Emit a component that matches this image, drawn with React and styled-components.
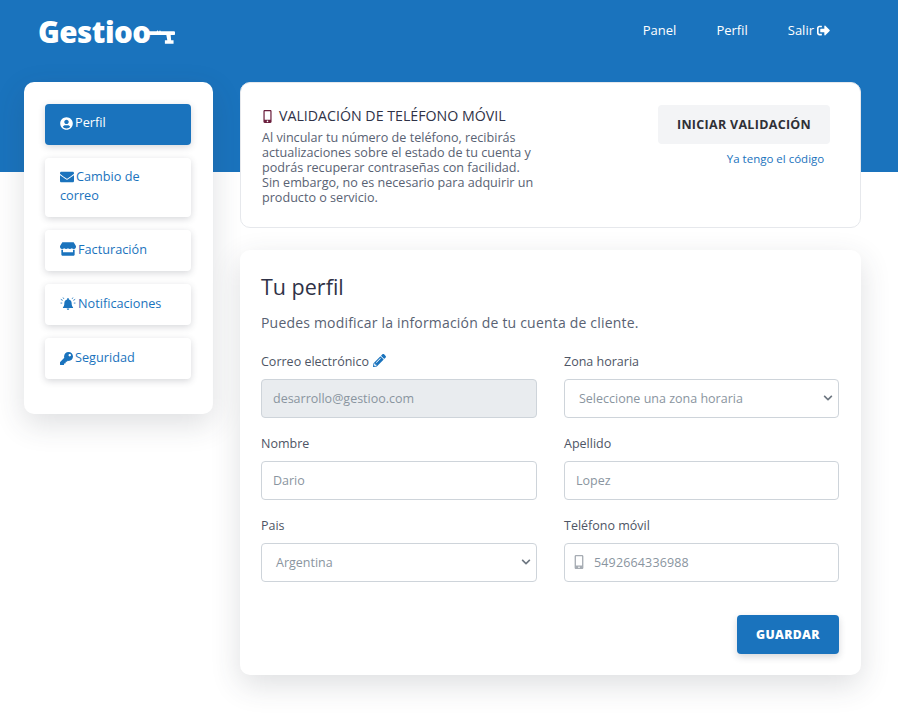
import React from "react";
import styled, { createGlobalStyle } from "styled-components";
import { FaUserCircle, FaEnvelope, FaStore, FaKey, FaMobileAlt, FaPencilAlt, FaSignOutAlt, FaChevronDown } from "react-icons/fa";

const Global = createGlobalStyle`
  html, body { margin: 0; padding: 0; background: #fff; }
  body { font-family: "Open Sans", "Liberation Sans", sans-serif; color: #4a5568; }
  * { box-sizing: border-box; }
`;
const BLUE = "#1a73bd";

const Page = styled.div`
  min-height: 716px;
  background: linear-gradient(${BLUE} 172px, #fff 172px);
`;
const TopBar = styled.header`
  height: 82px;
  display: flex;
  justify-content: space-between;
  padding: 12px 68px 0 38px;
`;
const Logo = styled.div`
  display: flex;
  align-items: center;
  height: 38px;
  color: #fff;
  font-family: "Open Sans", sans-serif;
  font-weight: 800;
  font-size: 29.5px;
  letter-spacing: -0.5px;
`;
const LogoKey = styled.svg`
  margin: 10px 0 0 -2px;
`;
const Nav = styled.nav`
  display: flex;
  gap: 40px;
  height: 36px;
  align-items: center;
`;
const NavLink = styled.a`
  color: #fff;
  font-size: 13px;
  font-weight: 500;
  display: flex;
  align-items: center;
  gap: 3px;
`;
const Layout = styled.div`
  display: grid;
  grid-template-columns: 189px 621px;
  column-gap: 27px;
  padding-left: 24px;
  align-items: start;
`;
const Sidebar = styled.aside`
  background: #fff;
  border-radius: 10px;
  padding: 22px 22px 35px 21px;
  box-shadow: 0 10px 30px rgba(50, 55, 70, 0.16);
  display: flex;
  flex-direction: column;
  gap: 13px;
`;
const MenuItem = styled.a`
  display: block;
  border-radius: 4px;
  height: ${(p) => p.$height};
  padding: ${(p) => (p.$roomy ? "10px" : "9px")} 15px 0;
  font-size: 12.7px;
  line-height: 19px;
  background: ${(p) => (p.$active ? BLUE : "#fff")};
  color: ${(p) => (p.$active ? "#fff" : BLUE)};
  box-shadow: 0 2px 7px rgba(50, 55, 70, 0.2);
  svg { vertical-align: -3px; margin-right: 2px; }
`;
const Main = styled.main`
  display: flex;
  flex-direction: column;
  gap: 22px;
`;
const ValidationCard = styled.section`
  background: #fff;
  border: 1px solid #e6e8ec;
  border-radius: 10px;
  height: 146px;
  padding: 22px 30px 0 20px;
  display: flex;
  justify-content: space-between;
`;
const ValidationText = styled.div`
  width: 276px;
  padding-top: 1px;
`;
const ValidationTitle = styled.h3`
  margin: 0 0 4px;
  font-size: 14.2px;
  line-height: 20px;
  font-weight: 400;
  color: #2f3247;
  white-space: nowrap;
  display: flex;
  align-items: center;
  gap: 5px;
  svg { color: #6b1f3d; }
`;
const ValidationBody = styled.p`
  margin: 0;
  font-size: 12.6px;
  line-height: 15.1px;
  color: #596273;
  padding-left: 1px;
`;
const ValidationActions = styled.div`
  width: 172px;
  display: flex;
  flex-direction: column;
  align-items: center;
`;
const GreyButton = styled.button`
  width: 172px;
  height: 39px;
  border: 0;
  border-radius: 4px;
  background: #f3f4f6;
  color: #2f3036;
  font: 700 12.5px "Open Sans", sans-serif;
  letter-spacing: 0.3px;
`;
const CodeLink = styled.a`
  margin-top: 7px;
  padding-left: 63px;
  white-space: nowrap;
  font-size: 11.5px;
  line-height: 16px;
  color: ${BLUE};
`;
const ProfileCard = styled.section`
  background: #fff;
  border-radius: 10px;
  height: 425px;
  padding: 21px 22px 21px 21px;
  box-shadow: 0 10px 30px rgba(50, 55, 70, 0.16);
  display: flex;
  flex-direction: column;
`;
const Title = styled.h2`
  margin: 0;
  font-size: 21.5px;
  line-height: 32px;
  font-weight: 400;
  color: #2f3247;
`;
const Subtitle = styled.p`
  margin: 10px 0 0;
  font-size: 14px;
  line-height: 20px;
  letter-spacing: 0.19px;
  color: #596273;
`;
const FormGrid = styled.div`
  margin-top: 20px;
  display: grid;
  grid-template-columns: 276px 275px;
  column-gap: 27px;
  row-gap: 17.5px;
`;
const Field = styled.div`
  display: flex;
  flex-direction: column;
`;
const Label = styled.label`
  font-size: 12.5px;
  line-height: 18px;
  height: 18px;
  margin-bottom: 8px;
  color: #4e5565;
  svg { color: ${BLUE}; margin-left: 4px; vertical-align: -1px; }
`;
const Control = styled.div`
  height: 38.5px;
  border: 1px solid #ced4da;
  border-radius: 4px;
  background: ${(p) => (p.$disabled ? "#e9ecef" : "#fff")};
  display: flex;
  align-items: center;
  justify-content: space-between;
  padding: 0 ${(p) => (p.$select ? "5px" : "11px")} 0 ${(p) => (p.$select ? "14px" : "11px")};
  color: #8a95a0;
  font-size: 12.5px;
`;
const PhoneValue = styled.span`
  display: flex;
  align-items: center;
  gap: 8px;
  margin-left: -4px;
  letter-spacing: 0.15px;
  svg { color: #a6acb3; }
`;
const Actions = styled.div`
  margin-top: 33px;
  display: flex;
  justify-content: flex-end;
`;
const SaveButton = styled.button`
  width: 102px;
  height: 39px;
  border: 0;
  border-radius: 4px;
  background: ${BLUE};
  color: #fff;
  font: 800 12.2px "Open Sans", sans-serif;
  letter-spacing: 0.35px;
  box-shadow: 0 3px 7px rgba(50, 55, 70, 0.2);
`;

const KeyLogo = () => (
  <LogoKey width="26" height="15" viewBox="0 0 27 15" fill="#fff">
    <path d="M0 2h8l.8-1 .8 1h1l.8-1 .8 1H26c.6 0 1 .4 1 1v2c0 .6-.4 1-1 1h-3.500l.5 5.500h2.500V15h-9v-3.500h2.500L18 6H0z" />
  </LogoKey>
);
const BellOn = () => (
  <svg width="16" height="14" viewBox="0 0 16 15" fill="currentColor">
    <path d="M8 1.200c.5 0 .9.4.9.9v.5c1.900.4 3 1.900 3 3.800 0 3 .9 3.800 1.500 4.500.2.300 0 .8-.4.8H3c-.4 0-.6-.5-.4-.8.6-.7 1.500-1.500 1.500-4.500 0-1.900 1.100-3.400 3-3.800v-.5c0-.5.4-.9.9-.9zM6.600 12.300h2.800c0 .8-.6 1.400-1.400 1.400s-1.400-.6-1.400-1.400z" />
    <path d="M.3 2.500l2 1.100M15.700 2.500l-2 1.100M0 6.500h1.800M16 6.500h-1.800M2.700.6l.9 1.400M13.300.6l-.9 1.400" stroke="currentColor" strokeWidth="0.9" fill="none" />
  </svg>
);

const Text = ({ label, children }) => (
  <Field>
    <Label>{label}</Label>
    {children}
  </Field>
);
const Chevron = () => <FaChevronDown size={10} color="#6d7680" />;

export default function App() {
  return (
    <Page>
      <Global />
      <TopBar>
        <Logo>Gestioo<KeyLogo /></Logo>
        <Nav>
          <NavLink>Panel</NavLink>
          <NavLink>Perfil</NavLink>
          <NavLink>Salir <FaSignOutAlt size={13} /></NavLink>
        </Nav>
      </TopBar>
      <Layout>
        <Sidebar>
          <MenuItem $active $height="40.8px"><FaUserCircle size={13} />Perfil</MenuItem>
          <MenuItem $height="59px"><FaEnvelope size={14} />Cambio de correo</MenuItem>
          <MenuItem $roomy $height="41px"><FaStore size={16} />Facturación</MenuItem>
          <MenuItem $roomy $height="41px"><BellOn />Notificaciones</MenuItem>
          <MenuItem $roomy $height="41px"><FaKey size={13} />Seguridad</MenuItem>
        </Sidebar>
        <Main>
          <ValidationCard>
            <ValidationText>
              <ValidationTitle><FaMobileAlt size={13} />VALIDACIÓN DE TELÉFONO MÓVIL</ValidationTitle>
              <ValidationBody>
                Al vincular tu número de teléfono, recibirás actualizaciones sobre el estado de tu cuenta y podrás recuperar contraseñas con facilidad. Sin embargo, no es necesario para adquirir un producto o servicio.
              </ValidationBody>
            </ValidationText>
            <ValidationActions>
              <GreyButton>INICIAR VALIDACIÓN</GreyButton>
              <CodeLink>Ya tengo el código</CodeLink>
            </ValidationActions>
          </ValidationCard>
          <ProfileCard>
            <Title>Tu perfil</Title>
            <Subtitle>Puedes modificar la información de tu cuenta de cliente.</Subtitle>
            <FormGrid>
              <Text label={<>Correo electrónico<FaPencilAlt size={13} /></>}>
                <Control $disabled>desarrollo@gestioo.com</Control>
              </Text>
              <Text label="Zona horaria">
                <Control $select>Seleccione una zona horaria<Chevron /></Control>
              </Text>
              <Text label="Nombre"><Control>Dario</Control></Text>
              <Text label="Apellido"><Control>Lopez</Control></Text>
              <Text label="Pais">
                <Control $select>Argentina<Chevron /></Control>
              </Text>
              <Text label="Teléfono móvil">
                <Control><PhoneValue><FaMobileAlt size={14} />5492664336988</PhoneValue></Control>
              </Text>
            </FormGrid>
            <Actions><SaveButton>GUARDAR</SaveButton></Actions>
          </ProfileCard>
        </Main>
      </Layout>
    </Page>
  );
}
